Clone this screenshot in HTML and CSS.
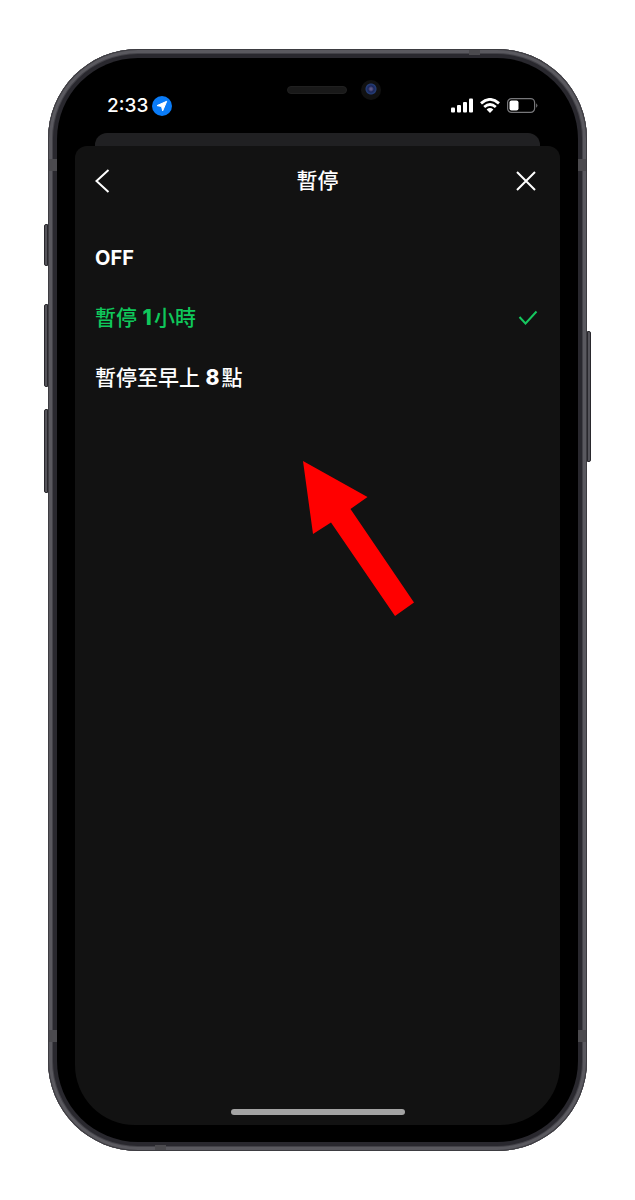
FILE: index.html
```html
<!DOCTYPE html>
<html lang="zh-Hant">
<head>
<meta charset="utf-8">
<meta name="viewport" content="width=device-width, initial-scale=1">
<title>暫停</title>
<link rel="stylesheet" href="styles.css">
</head>
<body>
<div class="phone">
  <span class="side-key key-mute"></span>
  <span class="side-key key-up"></span>
  <span class="side-key key-down"></span>
  <span class="side-key key-power"></span>
  <span class="band band-side band-left band-high"></span>
  <span class="band band-side band-right band-high"></span>
  <span class="band band-side band-left band-low"></span>
  <span class="band band-side band-right band-low"></span>
  <span class="band band-top"></span>
  <span class="band band-bottom"></span>
  <div class="bezel">
    <span class="speaker"></span>
    <span class="camera"></span>
    <div class="status">
      <div class="status-group">
        <time class="clock">2:33</time>
        <svg class="location" width="20" height="20" viewBox="0 0 20 20" aria-hidden="true"><circle cx="10" cy="10" r="10" fill="#0a7cf8"/><path d="M14.700 5.300 10.700 14.800 9.500 10.500 5 9.600Z" fill="#fff" stroke="#fff" stroke-width="1" stroke-linejoin="round"/></svg>
      </div>
      <div class="status-group status-icons">
        <svg width="22" height="15" viewBox="0 0 22 15" fill="#fff" aria-hidden="true"><rect x="0" y="9.5" width="4" height="5" rx="1"/><rect x="6" y="7" width="4" height="7.500" rx="1"/><rect x="12" y="4" width="4" height="10.500" rx="1"/><rect x="18" y="0.500" width="4" height="14" rx="1"/></svg>
        <svg width="20" height="15" viewBox="0 0 20 15" fill="none" stroke="#fff" stroke-width="2.800" aria-hidden="true"><path d="M1 5.400Q10-2.600 19 5.400M4.200 9Q10 4 15.800 9"/><path d="M6.600 11.500Q10 8.600 13.400 11.500L10 15Z" fill="#fff" stroke="none"/></svg>
        <svg width="31" height="15" viewBox="0 0 31 15" aria-hidden="true"><rect x=".6" y=".6" width="27" height="13.800" rx="4" fill="none" stroke="#77777a" stroke-width="1.200"/><rect x="2.500" y="2.500" width="9" height="10" rx="2" fill="#fff"/><path d="M29.200 5.200Q31.600 7.500 29.200 9.800Z" fill="#77777a"/></svg>
      </div>
    </div>
    <div class="sheet-behind"></div>
    <main class="sheet">
      <header class="bar">
        <button class="icon-button" type="button" aria-label="返回"><svg width="15" height="24" viewBox="0 0 15 24"><path d="M13.500 1 1.500 12l12 11"/></svg></button>
        <h1 class="title">暫停</h1>
        <button class="icon-button close" type="button" aria-label="關閉"><svg width="20" height="20" viewBox="0 0 20 20"><path d="M1 1l18 18M19 1 1 19"/></svg></button>
      </header>
      <form class="options">
        <label class="option" for="off"><input class="choice" id="off" type="radio" name="pause"><span>OFF</span></label>
        <label class="option" for="hour"><input class="choice" id="hour" type="radio" name="pause" checked><span>暫停 <b>1</b>小時</span><svg class="tick" width="20" height="16" viewBox="0 0 20 16" aria-hidden="true"><path d="M1.500 7 7.500 13.500 18.500 1.500"/></svg></label>
        <label class="option" for="morning"><input class="choice" id="morning" type="radio" name="pause"><span>暫停至早上 <b>8</b>點</span></label>
      </form>
      <svg class="pointer" width="112" height="156" viewBox="0 0 112 156" aria-hidden="true"><path d="M0 0 64.500 36 47.500 48 111 141.500 92 155 28 61.500 10 73Z" fill="#f00"/></svg>
      <div class="home"></div>
    </main>
  </div>
</div>
</body>
</html>
```
FILE: styles.css
```css
* { box-sizing: border-box; }

body {
  margin: 0;
  min-height: 100vh;
  padding: 49px 48px;
  display: flex;
  background: #fff;
  color: #fff;
  font-family: Inter, "Noto Sans CJK TC", sans-serif;
  font-size: 21px;
  line-height: 30px;
}

.phone {
  position: relative;
  flex: 1;
  display: flex;
  padding: 9px;
  border-radius: 90px;
  background: #29282e;
  box-shadow: inset 0 0 0 1px #3d3c41, inset 0 0 0 4px #5a595f, inset 0 0 0 5px #434248;
}

.bezel {
  position: relative;
  flex: 1;
  display: flex;
  flex-direction: column;
  padding: 0 18px 17px;
  border-radius: 81px;
  background: #000;
}

.side-key {
  position: absolute;
  left: -4px;
  width: 4px;
  border: 1px solid #29282d;
  border-radius: 2px 0 0 2px;
  background: #55545a;
}
.key-mute { top: 175px; height: 42px; }
.key-up { top: 255px; height: 83px; }
.key-down { top: 360px; height: 84px; }
.key-power {
  top: 282px;
  left: auto;
  right: -4px;
  height: 131px;
  border-radius: 0 2px 2px 0;
}

.band { position: absolute; background: #4b4a4e; }
.band-side { width: 8px; height: 12px; }
.band-left { left: 1px; }
.band-right { right: 1px; }
.band-high { top: 110px; }
.band-low { bottom: 109px; }
.band-top { top: 1px; right: 107px; width: 11px; height: 5px; }
.band-bottom { bottom: 1px; left: 107px; width: 11px; height: 5px; }

.speaker {
  position: absolute;
  top: 28px;
  left: 230px;
  width: 60px;
  height: 8px;
  border: 1px solid #202020;
  border-radius: 4px;
  background: #191919;
}
.camera {
  position: absolute;
  top: 22px;
  left: 304px;
  width: 20px;
  height: 20px;
  border-radius: 50%;
  background: radial-gradient(circle at 50% 45%, #5a5685 0 1px, #1b2659 3px, #253e78 5px, #111 6px);
}

.status {
  height: 75px;
  padding: 20px 22px 0 32px;
  display: flex;
  align-items: center;
  justify-content: space-between;
}
.status-group { display: flex; align-items: center; gap: 4px; }
.status-icons { gap: 7px; }
.clock { font-size: 19px; font-weight: 500; }

.sheet-behind {
  height: 13px;
  margin: 0 20px;
  border-radius: 12px 12px 0 0;
  background: #202022;
}

.sheet {
  position: relative;
  flex: 1;
  display: flex;
  flex-direction: column;
  padding: 0 20px 10px;
  border-radius: 12px 12px 60px 60px;
  background: #121212;
}

.bar {
  height: 70px;
  display: grid;
  grid-template-columns: 40px 1fr 40px;
  align-items: center;
}
.title {
  margin: 0;
  font-size: 21px;
  font-weight: 500;
  text-align: center;
}
.icon-button {
  height: 40px;
  padding: 0;
  border: 0;
  display: flex;
  align-items: center;
  background: none;
  cursor: pointer;
}
.close { justify-content: flex-end; padding-right: 4px; }
.icon-button path { fill: none; stroke: #fff; stroke-width: 2; }

.options { padding-top: 12px; }
.option {
  height: 60px;
  display: flex;
  align-items: center;
  justify-content: space-between;
  font-weight: 500;
  cursor: pointer;
}
.option:first-child { font-size: 20px; font-weight: 700; }
.option b { margin-right: 2px; font-weight: 800; }
.option:has(.choice:checked) { color: #0fc75b; }
.choice {
  appearance: none;
  position: absolute;
  width: 1px;
  height: 1px;
  margin: 0;
}
.tick { margin-right: 2px; }
.tick path { fill: none; stroke: #16c75f; stroke-width: 2; }

.pointer { position: absolute; top: 315px; left: 228px; }

.home {
  width: 174px;
  height: 6px;
  margin: auto auto 0;
  border-radius: 3px;
  background: #a3a3a3;
}
```
